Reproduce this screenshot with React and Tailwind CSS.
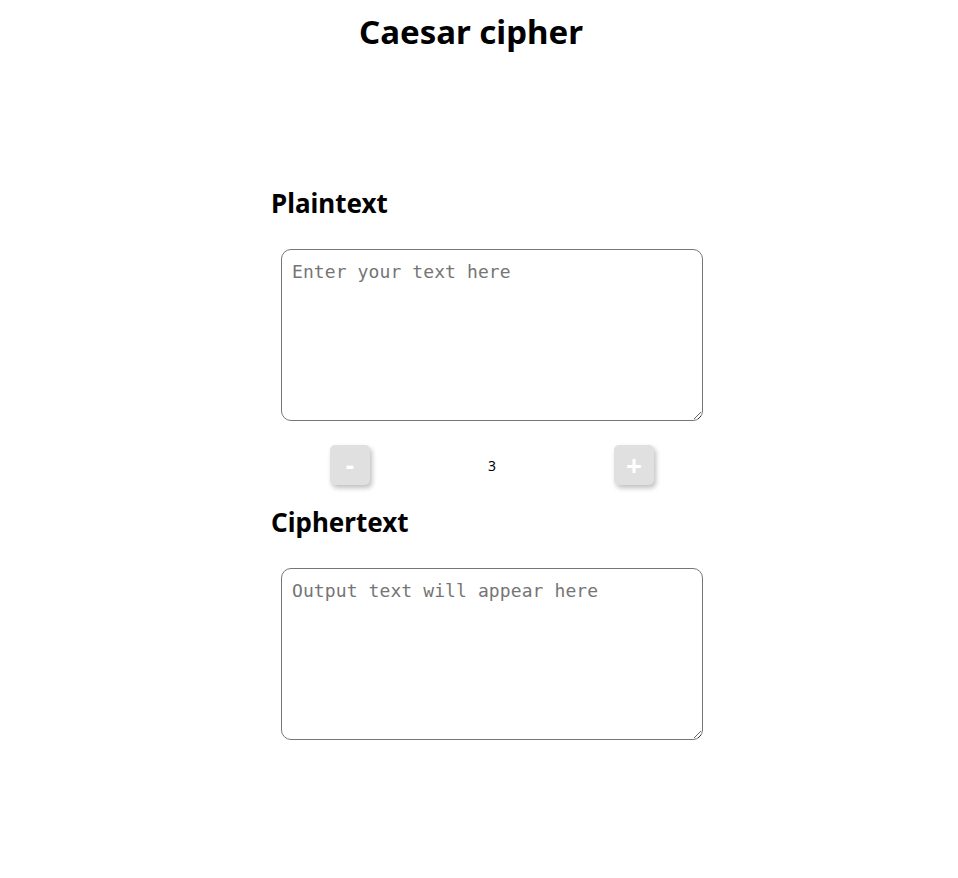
import React, { useState } from "react";

const shift = (text, n) =>
    text.replace(/[a-z]/gi, (c) => {
        const base = c <= "Z" ? 65 : 97;
        return String.fromCharCode(((c.charCodeAt(0) - base + n + 26 * 10) % 26) + base);
    });

const App = () => {
    const [plain, setPlain] = useState("");
    const [key, setKey] = useState(3);

    return (
        <div className="min-h-screen bg-white text-black" style={{ fontFamily: '"Noto Sans", "Open Sans", sans-serif' }}>
            <h1 className="h-[64px] flex items-center justify-center text-[33px] font-bold pr-[16px]">Caesar cipher</h1>
            <div className="pl-[271px]">
                <div className="w-[442px] flex flex-col">
                    <h2 className="mt-[123px] h-[32px] flex items-center text-[26px] font-bold">Plaintext</h2>
                    <textarea
                        value={plain}
                        onChange={(e) => setPlain(e.target.value)}
                        placeholder="Enter your text here"
                        className="mt-[30px] ml-[10px] w-[422px] h-[172px] border border-[#767676] rounded-[10px] px-[10px] py-[11px] text-[18px] tracking-[0.1px] leading-[22px] placeholder:text-[#757575] focus:outline-none"
                        style={{ fontFamily: '"DejaVu Sans Mono", "Liberation Mono", monospace' }}
                    />
                    <div className="mt-[24px] flex justify-around items-center">
                        <button
                            onClick={() => setKey(key - 1)}
                            className="w-[40px] h-[40px] rounded-[5px] bg-[#e0e0e0] text-white text-[26px] font-bold shadow-[2px_3px_5px_rgba(0,0,0,0.25)] flex items-center justify-center"
                        >
                            -
                        </button>
                        <span className="text-[14px]">{key}</span>
                        <button
                            onClick={() => setKey(key + 1)}
                            className="w-[40px] h-[40px] rounded-[5px] bg-[#e0e0e0] text-white text-[28px] font-bold shadow-[2px_3px_5px_rgba(0,0,0,0.25)] flex items-center justify-center"
                        >
                            +
                        </button>
                    </div>
                    <h2 className="mt-[21px] h-[32px] flex items-center text-[26px] font-bold">Ciphertext</h2>
                    <textarea
                        readOnly
                        value={shift(plain, key)}
                        placeholder="Output text will appear here"
                        className="mt-[30px] ml-[10px] w-[422px] h-[172px] border border-[#767676] rounded-[10px] px-[10px] py-[11px] text-[18px] tracking-[0.1px] leading-[22px] placeholder:text-[#757575] focus:outline-none"
                        style={{ fontFamily: '"DejaVu Sans Mono", "Liberation Mono", monospace' }}
                    />
                </div>
            </div>
        </div>
    );
};

export default App;
